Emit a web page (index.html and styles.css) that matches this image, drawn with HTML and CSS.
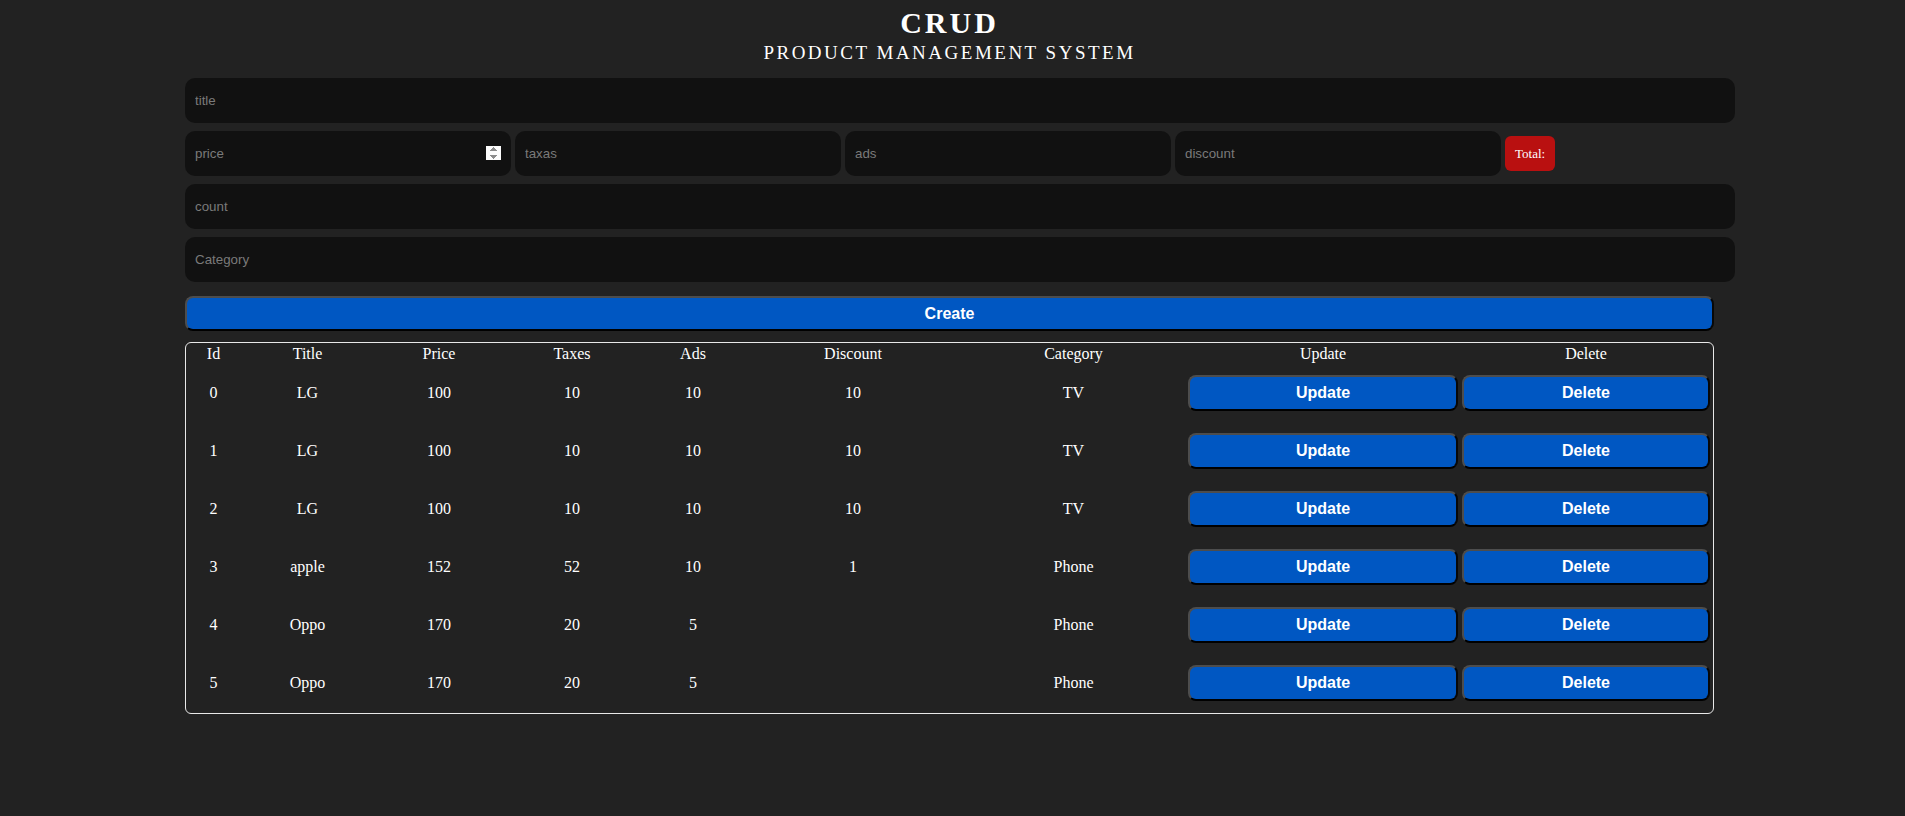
FILE: index.html
```html
<!DOCTYPE html>
<html lang="en">
<head>
<meta charset="utf-8">
<title>CRUD</title>
<link rel="stylesheet" href="styles.css">
</head>
<body>
<div class="crud">
  <div class="head">
    <h2 class="head-title">CRUD</h2>
    <p class="head-sub">Product Management System</p>
  </div>
  <div class="inputs">
    <input class="field" type="text" placeholder="title">
    <div class="price-row">
      <input class="field small" type="number" placeholder="price">
      <input class="field small" type="number" placeholder="taxas">
      <input class="field small" type="number" placeholder="ads">
      <input class="field small" type="number" placeholder="discount">
      <small class="total">Total:</small>
    </div>
    <input class="field" type="number" placeholder="count">
    <input class="field" type="text" placeholder="Category">
  </div>
  <button class="btn create">Create</button>
  <table class="outputs">
    <colgroup>
      <col class="c-id"><col class="c-title"><col class="c-price"><col class="c-taxes"><col class="c-ads"><col class="c-discount"><col class="c-category"><col class="c-update"><col class="c-delete">
    </colgroup>
    <thead>
      <tr><th>Id</th><th>Title</th><th>Price</th><th>Taxes</th><th>Ads</th><th>Discount</th><th>Category</th><th>Update</th><th>Delete</th></tr>
    </thead>
    <tbody>
      <tr><td>0</td><td>LG</td><td>100</td><td>10</td><td>10</td><td>10</td><td>TV</td><td><button class="btn row-btn">Update</button></td><td><button class="btn row-btn">Delete</button></td></tr>
      <tr><td>1</td><td>LG</td><td>100</td><td>10</td><td>10</td><td>10</td><td>TV</td><td><button class="btn row-btn">Update</button></td><td><button class="btn row-btn">Delete</button></td></tr>
      <tr><td>2</td><td>LG</td><td>100</td><td>10</td><td>10</td><td>10</td><td>TV</td><td><button class="btn row-btn">Update</button></td><td><button class="btn row-btn">Delete</button></td></tr>
      <tr><td>3</td><td>apple</td><td>152</td><td>52</td><td>10</td><td>1</td><td>Phone</td><td><button class="btn row-btn">Update</button></td><td><button class="btn row-btn">Delete</button></td></tr>
      <tr><td>4</td><td>Oppo</td><td>170</td><td>20</td><td>5</td><td></td><td>Phone</td><td><button class="btn row-btn">Update</button></td><td><button class="btn row-btn">Delete</button></td></tr>
      <tr><td>5</td><td>Oppo</td><td>170</td><td>20</td><td>5</td><td></td><td>Phone</td><td><button class="btn row-btn">Update</button></td><td><button class="btn row-btn">Delete</button></td></tr>
    </tbody>
  </table>
</div>
</body>
</html>
```

FILE: styles.css
```css
html, body {
  margin: 0;
  padding: 0;
  background: #222222;
  color: #ffffff;
  font-family: "Liberation Serif", "Times New Roman", serif;
}

.crud {
  width: 1550px;
  margin-left: 185px;
}

.head {
  width: 1529px;
  text-align: center;
  padding-top: 6px;
}

.head-title {
  margin: 0;
  font-size: 30px;
  line-height: 34px;
  font-weight: bold;
  letter-spacing: 3px;
}

.head-sub {
  margin: 2px 0 0;
  font-size: 19px;
  line-height: 22px;
  text-transform: uppercase;
  letter-spacing: 2.5px;
}

.inputs {
  display: flex;
  flex-direction: column;
  gap: 8px;
  margin-top: 14px;
}

.field {
  display: block;
  box-sizing: border-box;
  width: 1550px;
  height: 45px;
  margin: 0;
  padding: 0 10px;
  border: none;
  outline: none;
  border-radius: 10px;
  background: #111111;
  color: #ffffff;
  font-family: "Liberation Sans", Arial, sans-serif;
  font-size: 13.33px;
}

.field::placeholder {
  color: #7a7a7a;
}

.field[type=number]::-webkit-inner-spin-button {
  opacity: 0;
}

.price-row {
  display: flex;
  align-items: center;
  gap: 4px;
}

.field.small {
  width: 326px;
}

.price-row .field.small:first-child::-webkit-inner-spin-button {
  opacity: 1;
}

.total {
  display: flex;
  align-items: center;
  height: 35px;
  padding: 0 10px;
  border-radius: 6px;
  background: #b91010;
  color: #ffffff;
  font-family: "Liberation Serif", "Times New Roman", serif;
  font-size: 13px;
  font-weight: normal;
}

.btn {
  box-sizing: border-box;
  display: block;
  border-style: solid;
  border-width: 2px;
  border-color: #4d4d4d #080808 #000000 #4d4d4d;
  border-radius: 8px;
  background: #0057c2;
  color: #ffffff;
  font-family: "Liberation Sans", Arial, sans-serif;
  font-weight: bold;
  font-size: 16px;
  cursor: pointer;
}

.create {
  width: 1529px;
  height: 35px;
  margin-top: 14px;
}

.outputs {
  box-sizing: border-box;
  width: 1529px;
  margin-top: 11px;
  table-layout: fixed;
  border: 1px solid #e8e8e8;
  border-radius: 6px;
  border-spacing: 2px;
  text-align: center;
  font-size: 16px;
}

.outputs th {
  padding: 0 1px;
  font-weight: normal;
  line-height: 18px;
}

.outputs td {
  padding: 1px;
  line-height: 18px;
}

.c-id { width: 51px; }
.c-title { width: 133px; }
.c-price { width: 126px; }
.c-taxes { width: 136px; }
.c-ads { width: 102px; }
.c-discount { width: 214px; }
.c-category { width: 223px; }
.c-update { width: 272px; }
.c-delete { width: 250px; }

.row-btn {
  width: 100%;
  height: 36px;
  margin: 9px 0;
}
```
